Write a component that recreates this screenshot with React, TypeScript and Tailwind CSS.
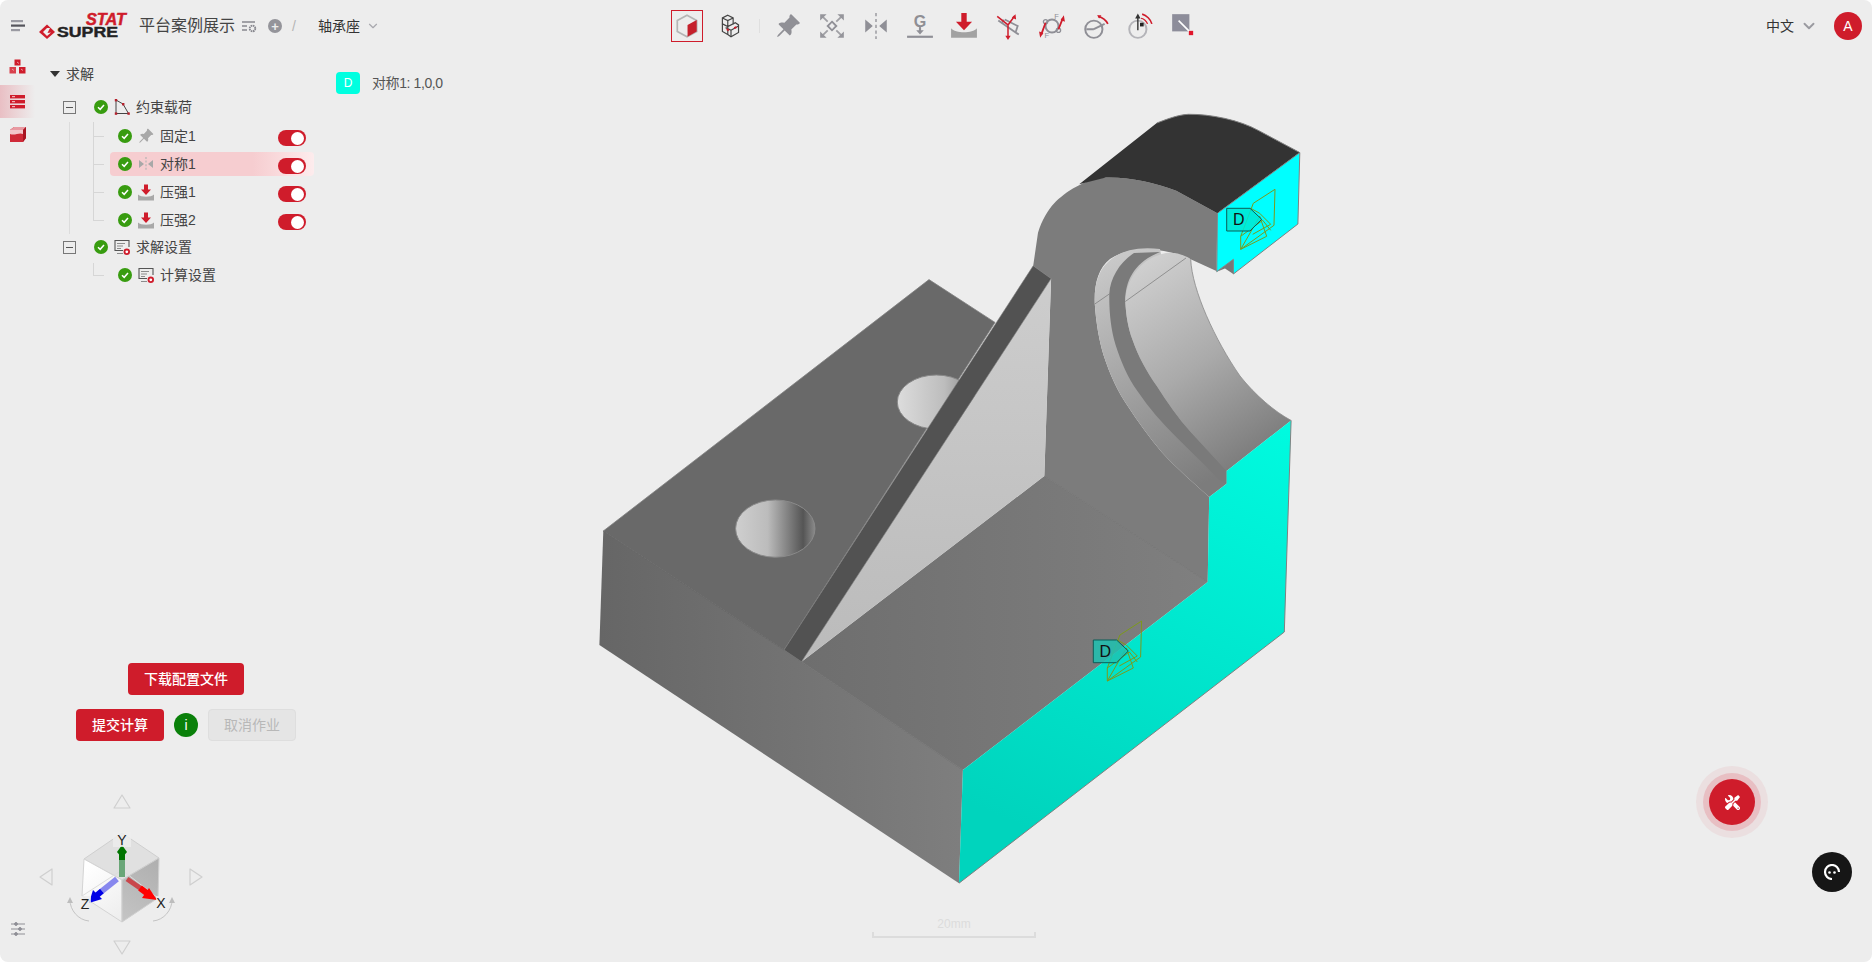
import { BsPinAngleFill } from "react-icons/bs";
import { FaTools } from "react-icons/fa";
import { LuChevronDown } from "react-icons/lu";

const fontStack = "font-['Liberation_Sans','Noto_Sans_CJK_SC',sans-serif]";

function MenuIcon() {
  return (
    <svg width="16" height="14" viewBox="0 0 16 14">
      <rect x="1" y="1" width="12" height="2.2" fill="#9a9aa2" />
      <rect x="1" y="5.5" width="14" height="2.2" fill="#55555c" />
      <rect x="1" y="10" width="9" height="2.2" fill="#9a9aa2" />
    </svg>
  );
}

function Logo() {
  return (
    <svg className="-mt-[2px]" width="92" height="30" viewBox="0 0 92 30">
      <path d="M1 22 L9 14.5 L17 22 L9 29 Z" fill="#cf1c2b" />
      <path d="M5 22 L9 18 L12 18 L9.5 23 L13 22.5 L9 26 Z" fill="#efefef" />
      <text x="19" y="27" fontFamily="Liberation Sans" fontWeight="700" fontSize="14" textLength="61" lengthAdjust="spacingAndGlyphs" stroke="#222" strokeWidth="0.4" fill="#222">
        SUPRE
      </text>
      <text x="48" y="15" fontFamily="Liberation Sans" fontWeight="700" fontStyle="italic" fontSize="16" textLength="40" lengthAdjust="spacingAndGlyphs" stroke="#cf1c2b" strokeWidth="0.5" fill="#cf1c2b">
        STAT
      </text>
    </svg>
  );
}

function ToolIcon({ children }: { children: React.ReactNode }) {
  return (
    <svg width="28" height="28" viewBox="0 0 26 26" fill="none">
      {children}
    </svg>
  );
}

const toolIcons = [
  <ToolIcon key="fit">
    <path d="M13 9 L17 13 L13 17 L9 13 Z" stroke="#8f8f96" strokeWidth="1.7" />
    <path d="M4 4 L9 9 M22 4 L17 9 M4 22 L9 17 M22 22 L17 17" stroke="#a0a0a5" strokeWidth="1.7" />
    <path d="M2 2 H8 L2 8 Z M24 2 H18 L24 8 Z M2 24 H8 L2 18 Z M24 24 H18 L24 18 Z" fill="#95959b" />
  </ToolIcon>,
  <ToolIcon key="sym">
    <path d="M3 7 L10 13 L3 19 Z M23 7 L16 13 L23 19 Z" fill="#8f8f96" />
    <path d="M13 1 V25" stroke="#a5a5aa" strokeWidth="1.6" strokeDasharray="3 2.4" />
  </ToolIcon>,
  <ToolIcon key="gravity">
    <text x="13" y="14" textAnchor="middle" fontFamily="Liberation Sans" fontWeight="700" fontSize="15" fill="#8f8f94">
      G
    </text>
    <path d="M13 14 V19" stroke="#8f8f96" strokeWidth="2" />
    <path d="M9.5 17 L13 21 L16.5 17 Z" fill="#8f8f96" />
    <rect x="1" y="22" width="24" height="2" fill="#8f8f96" />
  </ToolIcon>,
  <ToolIcon key="pressure">
    <path d="M10.5 1 H15.5 V9 H20.5 L13 17 L5.5 9 H10.5 Z" fill="#cf1c2b" />
    <path d="M1 15 C5 20 21 20 25 15 V24 H1 Z" fill="#a2a2a2" />
  </ToolIcon>,
  <ToolIcon key="bearing">
    <path d="M4 8 L23 21 M10 7 L22 13 L20 19 M9 7 L7 11" stroke="#8f8f96" strokeWidth="1.7" />
    <path d="M3 4 L13 12 M13 12 L19 4 M13 12 L13 24" stroke="#cf1c2b" strokeWidth="1.4" />
    <path d="M20 2 L20.5 7 L16.5 5 Z M13 26 L10.5 22 H15.5 Z" fill="#cf1c2b" />
  </ToolIcon>,
  <ToolIcon key="force">
    <circle cx="13" cy="13" r="6" stroke="#8f8f96" strokeWidth="1.8" />
    <circle cx="7" cy="9" r="2" stroke="#8f8f96" strokeWidth="1.2" />
    <circle cx="19" cy="17" r="2" stroke="#8f8f96" strokeWidth="1.2" />
    <path d="M3 21 L7 10 M19 16 L23 6" stroke="#cf1c2b" strokeWidth="1.7" />
    <path d="M24 3 L25 9 L21 7.5 Z M2 24 L1 18 L5 19.5 Z" fill="#cf1c2b" />
    <text x="15" y="6.5" fontFamily="Liberation Sans" fontSize="7" fill="#8f8f96">F</text>
    <text x="6" y="24.5" fontFamily="Liberation Sans" fontSize="7" fill="#8f8f96">F</text>
  </ToolIcon>,
  <ToolIcon key="moment">
    <circle cx="11" cy="16" r="8" stroke="#8f8f96" strokeWidth="1.8" />
    <path d="M11 16 L21 11 M11 16 H4" stroke="#8f8f96" strokeWidth="1.8" />
    <path d="M15 4 C19 5 22 7 24 11" stroke="#cf1c2b" strokeWidth="1.6" />
    <path d="M14 3 L18 3 L16 6 Z" fill="#cf1c2b" />
  </ToolIcon>,
  <ToolIcon key="remote">
    <circle cx="11" cy="16" r="8" stroke="#b4b4b9" strokeWidth="1.8" />
    <path d="M11 17 V3" stroke="#333" strokeWidth="1.3" />
    <path d="M8.5 6 L11 1.5 L13.5 6 Z" fill="#333" />
    <rect x="13" y="10" width="3.4" height="3.4" fill="#222" />
    <path d="M15 2 C19 3 23 7 24 11" stroke="#cf1c2b" strokeWidth="1.5" />
    <path d="M14 6 C16 6 19 8 20 11" stroke="#cf1c2b" strokeWidth="1.2" />
  </ToolIcon>,
  <ToolIcon key="corner">
    <rect x="2" y="2" width="16" height="16" fill="#8d8d9a" />
    <path d="M8 8 L18 18" stroke="#fff" strokeWidth="1.5" />
    <rect x="17.5" y="17.5" width="4" height="4" fill="#e0162b" />
  </ToolIcon>,
];

function CubeIcon() {
  return (
    <svg width="26" height="28" viewBox="0 0 24 26" fill="none">
      <path d="M12 3 L21 8 V18 L12 23 L3 18 V8 Z" stroke="#b5b5b5" strokeWidth="1.6" />
      <path d="M12.5 12 L21 7.5 V18 L12.5 23 Z" fill="#c5202c" />
    </svg>
  );
}

function MultiCubeIcon() {
  return (
    <svg width="26" height="28" viewBox="0 0 24 26" fill="none" stroke="#444" strokeWidth="1.1">
      <path d="M9 3 L14 5.5 V11 L9 13.5 L4 11 V5.5 Z M4 5.5 L9 8 L14 5.5 M9 8 V13.5" />
      <path d="M4 11 V18 L9 21 L12 23 L19 19 V12 L16 10 L14 11" />
      <path d="M9 13.5 V21 M12 17 V23 M12 17 L19 13 M12 17 L7 14.5" />
      <path d="M8 16 L10 17 M15 15 L17 14" stroke="#cf1c2b" strokeWidth="1.8" />
    </svg>
  );
}

function ToolbarButton({ children, active }: { children: React.ReactNode; active?: boolean }) {
  return (
    <div className="flex h-8 w-11 items-center justify-center">
      <div className={active ? "flex size-8 items-center justify-center border border-[#cf1c2b]" : "flex size-8 items-center justify-center"}>
        {children}
      </div>
    </div>
  );
}

function Header() {
  return (
    <header className="flex h-[50px] shrink-0 items-center pt-[2px]">
      <div className="flex w-[665px] shrink-0 items-center">
        <div className="ml-[10px] flex w-[28px] shrink-0">
          <MenuIcon />
        </div>
        <div className="w-[96px] shrink-0">
          <Logo />
        </div>
        <span className="ml-[5px] text-base leading-6 text-[#444]">平台案例展示</span>
        <svg className="ml-[6px]" width="16" height="14" viewBox="0 0 16 14" fill="none">
          <path d="M1 3 H14 M1 7 H6 M1 11 H6" stroke="#88888f" strokeWidth="1.5" />
          <circle cx="11.5" cy="9.5" r="2.8" stroke="#88888f" strokeWidth="1.8" strokeDasharray="1.6 0.6" />
        </svg>
        <div className="ml-[11px] flex size-[14px] items-center justify-center rounded-full bg-[#94949a] text-[13px] leading-none font-bold text-[#ededed]">
          +
        </div>
        <span className="ml-[10px] text-sm leading-5 text-[#b5b5b5]">/</span>
        <span className="ml-[22px] text-sm leading-5 text-[#333]">轴承座</span>
        <LuChevronDown className="ml-[6px] text-[#a8a8ae]" size={14} />
      </div>

      <div className="flex items-center">
        <ToolbarButton active>
          <CubeIcon />
        </ToolbarButton>
        <ToolbarButton>
          <MultiCubeIcon />
        </ToolbarButton>
        <div className="mr-[6px] ml-[6px] h-[14px] w-px bg-[#dfdfdf]" />
        <ToolbarButton>
          <BsPinAngleFill size={26} className="text-[#909096]" />
        </ToolbarButton>
        {toolIcons.map((icon) => (
          <ToolbarButton key={icon.key}>{icon}</ToolbarButton>
        ))}
      </div>

      <div className="mr-[10px] ml-auto flex items-center">
        <span className="text-sm leading-5 text-[#333]">中文</span>
        <LuChevronDown className="ml-[6px] text-[#9a9aa0]" size={18} strokeWidth={2.5} />
        <div className="ml-[16px] flex size-7 items-center justify-center rounded-full bg-[#cf1c2b] text-sm leading-none text-white">
          A
        </div>
      </div>
    </header>
  );
}

function Rail() {
  return (
    <aside className="flex w-9 shrink-0 flex-col pt-[2px]">
      <div className="flex h-[33px] w-[35px] items-center justify-center pb-[5px]">
        <svg width="17" height="15" viewBox="0 0 17 15" fill="#cf1c2b">
          <path d="M5.5 0.5 H11.5 V6.5 H5.5 Z" />
          <path d="M0.5 8 H7 V14.5 H0.5 Z" fill="#d9414d" />
          <path d="M10 8 H16.5 V14.5 H10 Z" />
          <path d="M8 3 L10 4.5 M3 10 L5 11.5 M12 10 L14 11.5" stroke="#f2b8bd" strokeWidth="0.8" />
        </svg>
      </div>
      <div className="flex h-[33px] w-[35px] items-center justify-center bg-gradient-to-r from-[#e9bfc4] to-[#ededed]">
        <svg width="15" height="14" viewBox="0 0 15 14" fill="#cf1c2b">
          <rect width="15" height="3.4" y="0" />
          <rect width="15" height="3.4" y="5" />
          <rect width="15" height="3.4" y="10" />
          <path d="M2 1.7 H5 M2 6.7 H5 M2 11.7 H5" stroke="#fff" strokeWidth="0.8" />
        </svg>
      </div>
      <div className="flex h-[33px] w-[35px] items-center justify-center">
        <svg width="18" height="18" viewBox="0 0 18 18">
          <path d="M1 4 L5 1 H17 V12 L14 16 H1 Z" fill="#cf2a38" />
          <path d="M1 4 L5 1 H17 L14 4 Z" fill="#e89aa2" />
          <path d="M1 4 H14 V8 C10 6 6 10 1 8 Z" fill="#f3c6ca" />
          <path d="M14 4 L17 1 V12 L14 16 Z" fill="#a81522" />
        </svg>
      </div>
      <div className="mt-auto mb-[26px] flex w-[35px] justify-center">
        <svg width="14" height="14" viewBox="0 0 14 14" stroke="#8f8f96" fill="#8f8f96">
          <path d="M0 2 H14 M0 7 H14 M0 12 H14" strokeWidth="1.2" />
          <circle cx="5" cy="2" r="1.4" />
          <circle cx="9" cy="7" r="1.4" />
          <circle cx="5" cy="12" r="1.4" />
        </svg>
      </div>
    </aside>
  );
}

function StatusCheck() {
  return (
    <svg className="shrink-0" width="14" height="14" viewBox="0 0 14 14">
      <circle cx="7" cy="7" r="7" fill="#389c10" />
      <path d="M4 7.2 L6.2 9.3 L10 5" stroke="#fff" strokeWidth="1.5" fill="none" />
    </svg>
  );
}

function CollapseBox() {
  return (
    <span className="flex size-[13px] shrink-0 items-center justify-center border border-[#777]">
      <span className="h-px w-[7px] bg-[#555]" />
    </span>
  );
}

function ConstraintIcon() {
  return (
    <svg width="16" height="16" viewBox="0 0 16 16" fill="none">
      <path d="M2 1 V14.5 H14.5 L9 5 Z" stroke="#444" strokeWidth="1" />
      <rect x="0.8" y="0" width="2.4" height="2.4" fill="#b5202c" />
      <rect x="0.8" y="13.4" width="2.4" height="2.4" fill="#b5202c" />
      <rect x="13.4" y="13.4" width="2.4" height="2.4" fill="#b5202c" />
      <rect x="8" y="4" width="2.4" height="2.4" fill="#b5202c" />
    </svg>
  );
}

function SettingsDocIcon() {
  return (
    <svg width="16" height="16" viewBox="0 0 16 16" fill="none">
      <path d="M9 11.5 H1 V1.5 H15 V8" stroke="#555" strokeWidth="1.1" />
      <path d="M3 4.5 H11 M3 7 H9 M3 9.5 H7 M3 14.5 H9" stroke="#8c8c8c" strokeWidth="1.1" />
      <circle cx="12.8" cy="12.8" r="2.3" stroke="#cf1c2b" strokeWidth="1.8" fill="#fff" />
    </svg>
  );
}

function SymmetryIcon() {
  return (
    <svg width="16" height="16" viewBox="0 0 16 16">
      <path d="M1 4 L6 8 L1 12 Z M15 4 L10 8 L15 12 Z" fill="#a8a8a8" />
      <path d="M8 1 V15" stroke="#b5b5b5" strokeWidth="1.2" strokeDasharray="2 1.6" />
    </svg>
  );
}

function PressureIcon() {
  return (
    <svg width="17" height="17" viewBox="0 0 16 16">
      <path d="M6 0 H10 V5 H13 L8 10.5 L3 5 H6 Z" fill="#cf1c2b" />
      <path d="M0 10 C3 13 13 13 16 10 V16 H0 Z" fill="#a8a8a8" />
    </svg>
  );
}

function Toggle() {
  return (
    <span className="flex h-4 w-7 shrink-0 translate-y-[2px] items-center justify-end rounded-full bg-[#cf1c2b] pr-[2px]">
      <span className="size-[13px] rounded-full bg-white" />
    </span>
  );
}

type LoadRowProps = {
  label: string;
  icon: React.ReactNode;
  active?: boolean;
  toggle?: boolean;
};

function LoadRow({ label, icon, active, toggle = true }: LoadRowProps) {
  return (
    <div className="relative ml-[74px] flex h-7 w-[204px] items-center">
      <span className="absolute top-1/2 -left-[17px] h-px w-[11px] bg-[#d6d6d6]" />
      <div
        className={
          active
            ? "flex h-6 w-full items-center rounded bg-gradient-to-r from-[#f6cdd0] from-70% to-[#fdeced] px-2"
            : "flex h-6 w-full items-center px-2"
        }
      >
        <StatusCheck />
        <span className="ml-[6px] flex w-4 shrink-0 justify-center">{icon}</span>
        <span className="ml-[6px] text-sm leading-5 text-[#444]">{label}</span>
        {toggle && (
          <span className="ml-auto">
            <Toggle />
          </span>
        )}
      </div>
    </div>
  );
}

function GroupRow({ label, icon }: { label: string; icon: React.ReactNode }) {
  return (
    <div className="flex h-7 items-center pl-[27px]">
      <CollapseBox />
      <span className="ml-[18px]">
        <StatusCheck />
      </span>
      <span className="ml-[6px] flex w-4 justify-center">{icon}</span>
      <span className="ml-[6px] text-sm leading-5 text-[#444]">{label}</span>
    </div>
  );
}

function TreePanel() {
  return (
    <aside className="flex w-[300px] shrink-0 flex-col pt-[10px] pb-[221px]">
      <div className="flex h-7 items-center pl-[14px]">
        <span className="h-0 w-0 border-x-[5px] border-t-[6px] border-x-transparent border-t-[#333]" />
        <span className="ml-[6px] text-sm leading-5 text-[#444]">求解</span>
      </div>

      <div className="mt-[5px]">
        <GroupRow label="约束载荷" icon={<ConstraintIcon />} />
      </div>
      <div className="relative mt-px">
        <span className="absolute top-0 left-[33px] h-[112px] w-px bg-[#dcdcdc]" />
        <span className="absolute top-0 left-[57px] h-[98px] w-px bg-[#d6d6d6]" />
        <LoadRow label="固定1" icon={<BsPinAngleFill size={16} className="text-[#a8a8a8]" />} />
        <LoadRow label="对称1" icon={<SymmetryIcon />} active />
        <LoadRow label="压强1" icon={<PressureIcon />} />
        <LoadRow label="压强2" icon={<PressureIcon />} />
      </div>

      <div className="-mt-px">
        <GroupRow label="求解设置" icon={<SettingsDocIcon />} />
      </div>
      <div className="relative">
        <span className="absolute top-[2px] left-[57px] h-[12px] w-px bg-[#d6d6d6]" />
        <LoadRow label="计算设置" icon={<SettingsDocIcon />} toggle={false} />
      </div>

      <div className="mt-auto flex flex-col items-center gap-[14px]">
        <button className="h-8 w-[116px] rounded bg-[#cf1c2b] text-sm leading-5 font-medium text-white">
          下载配置文件
        </button>
        <div className="flex items-center gap-[10px]">
          <button className="h-8 w-[88px] rounded bg-[#cf1c2b] text-sm leading-5 font-medium text-white">
            提交计算
          </button>
          <div className="flex size-6 items-center justify-center rounded-full bg-[#0a800a] text-sm leading-none text-white">
            i
          </div>
          <button className="h-8 w-[88px] rounded border border-[#dedede] bg-[#e5e5e5] text-sm leading-5 text-[#b8b8b8]">
            取消作业
          </button>
        </div>
      </div>
    </aside>
  );
}

function BoundaryMarker({ x, y, fill, stroke }: { x: number; y: number; fill: string; stroke: string }) {
  return (
    <g transform={`translate(${x} ${y})`}>
      <g fill="none" stroke="#7c9a1c" strokeWidth="1">
        <path d="M48.3 -19 L47.3 17 L14 41 V28 L26.6 -5 Z" />
        <path d="M14 41 L33 8 L40 28 Z" />
        <path d="M26 26 L44 16 L33 5 L24 0" />
        <path d="M14 28 L36 12 L44 22" />
      </g>
      <path d="M0 0 H23.3 L35 11 L23.3 22.7 H0 Z" fill={fill} fillOpacity="0.85" stroke={stroke} strokeWidth="1" />
      <text x="12" y="17" textAnchor="middle" fontFamily="Liberation Sans" fontSize="16" fill="#111">
        D
      </text>
    </g>
  );
}

function BearingModel() {
  return (
    <svg className="block h-full w-full" viewBox="336 50 1536 912" fill="none">
      <defs>
        <linearGradient id="frontFace" x1="600" x2="960" y1="0" y2="0" gradientUnits="userSpaceOnUse">
          <stop offset="0" stopColor="#666" />
          <stop offset="1" stopColor="#7e7e7e" />
        </linearGradient>
        <linearGradient id="floorFace" x1="800" x2="1200" y1="0" y2="0" gradientUnits="userSpaceOnUse">
          <stop offset="0" stopColor="#6e6e6e" />
          <stop offset="1" stopColor="#7f7f7f" />
        </linearGradient>
        <linearGradient id="ribFace" x1="0" x2="0" y1="280" y2="660" gradientUnits="userSpaceOnUse">
          <stop offset="0" stopColor="#cdcdcd" />
          <stop offset="1" stopColor="#bbb" />
        </linearGradient>
        <linearGradient id="cyanFace" x1="1290" y1="420" x2="1100" y2="860" gradientUnits="userSpaceOnUse">
          <stop offset="0" stopColor="#00fbe0" />
          <stop offset="1" stopColor="#00d4bd" />
        </linearGradient>
        <linearGradient id="boreFace" x1="1130" y1="255" x2="1260" y2="450" gradientUnits="userSpaceOnUse">
          <stop offset="0" stopColor="#d4d4d4" />
          <stop offset="0.55" stopColor="#aaa" />
          <stop offset="1" stopColor="#7d7d7d" />
        </linearGradient>
        <linearGradient id="ringFace" x1="1095" y1="270" x2="1210" y2="480" gradientUnits="userSpaceOnUse">
          <stop offset="0" stopColor="#c8c8c8" />
          <stop offset="1" stopColor="#7c7c7c" />
        </linearGradient>
        <linearGradient id="holeA" x1="736" x2="815" y1="0" y2="0" gradientUnits="userSpaceOnUse">
          <stop offset="0" stopColor="#cfcfcf" />
          <stop offset="0.4" stopColor="#bcbcbc" />
          <stop offset="0.85" stopColor="#555" />
          <stop offset="1" stopColor="#8a8a8a" />
        </linearGradient>
        <linearGradient id="holeB" x1="898" x2="975" y1="0" y2="0" gradientUnits="userSpaceOnUse">
          <stop offset="0" stopColor="#dcdcdc" />
          <stop offset="0.6" stopColor="#bdbdbd" />
          <stop offset="1" stopColor="#888" />
        </linearGradient>
      </defs>

      {/* base plate */}
      <path d="M603.3 531 L929 279.6 L995 322.4 L784 650 Z" fill="#696969" stroke="#808080" strokeWidth="0.8" />
      <ellipse cx="775.3" cy="528.6" rx="39.7" ry="28.6" fill="url(#holeA)" stroke="#8a8a8a" />
      <ellipse cx="936.3" cy="402" rx="39" ry="27" fill="url(#holeB)" stroke="#888" />

      <path d="M603.3 531 L599.4 645 L959 883.2 L962.9 770 L801.5 661.7 L784 650 Z" fill="url(#frontFace)" />
      <path d="M603.3 531 L784 650 L801.5 661.7 L962.9 770" stroke="#606060" strokeWidth="0.7" />

      {/* floor, wall and arm */}
      <path d="M801.5 661.7 L1044.3 476 L1207.7 582 L962.9 770 Z" fill="url(#floorFace)" />
      <path d="M1033.2 265.8 L1038 232.7 C1042 220 1048 210 1054 203.6 C1065 192 1085 179 1105.9 177.6 C1130 177 1155 183 1176.2 190.8 L1217.4 213.3 L1216.4 270.9 L1190.7 259.2 C1160 246 1130 246 1110 259 C1098 268 1094 285 1094.8 304 C1096 322 1099 340 1103.5 355 C1110 375 1118 392 1127.7 406 C1138 422 1150 438 1161.6 452 C1176 468 1195 484 1209.2 497 L1207.7 582 L1044.3 476 L1051.1 278.6 Z" fill="#7c7c7c" />
      <path d="M1044.3 476 L1207.7 582" stroke="#6b6b6b" strokeWidth="0.7" />

      {/* dark top of the arm */}
      <path d="M1079.2 184.2 L1156.8 123 C1170 118 1178 115 1188.3 114.3 C1210 114 1240 120 1258.6 130.6 L1299.8 152.6 L1217.4 213.3 L1176.2 190.8 C1155 183 1130 177 1105.9 177.6 Z" fill="#333" />
      <path d="M1156.8 123 C1170 118 1178 115 1188.3 114.3 C1210 114 1240 120 1258.6 130.6 L1299.8 152.6" stroke="#808080" strokeWidth="1" />

      {/* bore */}
      <path d="M1160 249 C1135 246 1118 252 1108 262 C1097 272 1094 288 1094.8 304 C1096 322 1099 340 1103.5 355 C1110 375 1118 392 1127.7 406 C1138 422 1150 438 1161.6 452 C1176 468 1195 484 1209.2 497 L1226.6 483.7 L1226.6 470.9 L1170 300 Z" fill="url(#ringFace)" />
      <path d="M1134 253 C1120 262 1110 278 1109.3 294 C1109 312 1111 330 1115.6 345 C1121 362 1128 378 1137.4 391 C1149 408 1162 423 1176.2 437 L1219.8 480 L1226.6 483.7 L1226.6 470.9 L1190.7 432 C1178 418 1167 402 1156.8 386 C1147 372 1138 356 1132.6 340 C1128 328 1126 315 1125.3 301.5 C1125 280 1135 262 1160 252 Z" fill="#7a7a7a" />
      <path d="M1125.3 301.5 C1126 280 1140 258 1166 253 C1175 252 1185 255 1190.7 259.2 C1192 290 1215 340 1240 376 C1255 395 1275 412 1291.1 420.4 L1226.6 470.9 L1190.7 432 C1178 418 1167 402 1156.8 386 C1147 372 1138 356 1132.6 340 C1128 328 1126 315 1125.3 301.5 Z" fill="url(#boreFace)" />
      <path d="M1094.8 304 L1109.3 294 M1125.3 301.5 L1186 258" stroke="#777" strokeWidth="0.7" />
      <path d="M1190.7 259.2 C1192 290 1215 340 1240 376 C1255 395 1275 412 1291.1 420.4" stroke="#888" strokeWidth="0.8" />

      {/* web */}
      <path d="M1051.1 278.6 L1044.3 476 L801.5 661.7 Z" fill="url(#ribFace)" />
      <path d="M1033.2 265.8 L1051.1 278.6 L801.5 661.7 L784 650 Z" fill="#525252" stroke="#7a7a7a" strokeWidth="0.6" />

      {/* cyan symmetry faces */}
      <path d="M962.9 770 L1207.7 582 L1209.2 497 L1226.6 483.7 L1226.6 470.9 L1291.1 420.4 L1284.3 632 L959 883.2 Z" fill="url(#cyanFace)" />
      <path d="M1291.1 420.4 L1284.3 632 L959 883.2" stroke="#808080" strokeWidth="1" />
      <path d="M1216.7 271.7 L1233.3 259.3 V274 L1225 268.5 Z" fill="#777" />
      <path d="M1217.4 213.3 L1299.8 152.6 L1297.9 224 L1233.4 274 V259.3 L1216.7 271.7 Z" fill="#0ff" stroke="#808080" strokeWidth="1" />

      <BoundaryMarker x={1226.7} y={208.3} fill="#00e8d4" stroke="#0b5e58" />
      <BoundaryMarker x={1093.3} y={640} fill="#1fc2b2" stroke="#0b5e58" />
    </svg>
  );
}

function NavCube() {
  return (
    <svg className="absolute bottom-0 left-[30px]" width="180" height="172" viewBox="0 0 180 172" fill="none">
      <defs>
        <linearGradient id="cubeLeft" x1="53" y1="80" x2="92" y2="130" gradientUnits="userSpaceOnUse">
          <stop offset="0" stopColor="#fff" />
          <stop offset="1" stopColor="#ededed" />
        </linearGradient>
        <linearGradient id="cubeRight" x1="92" y1="130" x2="129" y2="75" gradientUnits="userSpaceOnUse">
          <stop offset="0" stopColor="#c4c4c4" />
          <stop offset="1" stopColor="#b0b0b0" />
        </linearGradient>
      </defs>
      <path d="M92 43 L129 68 L92 90 L54 69 Z" fill="#e0e0e0" stroke="#cfcfcf" />
      <path d="M54 69 L92 90 L92 132 L52 106 Z" fill="url(#cubeLeft)" stroke="#d4d4d4" />
      <path d="M129 68 L92 90 L92 132 L128 108 Z" fill="url(#cubeRight)" stroke="#cfcfcf" />
      <path d="M52 106 L92 80 L128 108" stroke="#dcdcdc" />
      <path d="M92 87 V70" stroke="#6aa678" strokeWidth="6" />
      <path d="M92 70 V62" stroke="#007400" strokeWidth="6" />
      <path d="M92 55 L97 62 L92 68 L87 62 Z" fill="#007400" />
      <path d="M87 89 L72 101" stroke="#8888ee" strokeWidth="6" />
      <path d="M72 101 L66 106" stroke="#0000e6" strokeWidth="6" />
      <path d="M59 113 L63 100 L72 109 Z" fill="#0000e6" />
      <path d="M97 89 L113 100" stroke="#c9474c" strokeWidth="5" />
      <path d="M110 98 L118 104" stroke="#f00" strokeWidth="6" />
      <path d="M127 110 L112 108 L119 98 Z" fill="#f00" />
      <rect x="83" y="42" width="18" height="15" fill="#ededed" fillOpacity="0.8" />
      <rect x="50" y="106" width="11" height="14" fill="#ededed" fillOpacity="0.8" />
      <rect x="126" y="106" width="12" height="14" fill="#ededed" fillOpacity="0.8" />
      <text x="92" y="55" textAnchor="middle" fontFamily="Liberation Sans" fontSize="14" fill="#222">Y</text>
      <text x="55" y="119" textAnchor="middle" fontFamily="Liberation Sans" fontSize="14" fill="#222">Z</text>
      <text x="131" y="118" textAnchor="middle" fontFamily="Liberation Sans" fontSize="14" fill="#222">X</text>
      <g stroke="#cfcfcf" strokeWidth="1.2" strokeLinejoin="round">
        <path d="M92 5 L84 18 H100 Z" />
        <path d="M10 87 L22 79 V95 Z" />
        <path d="M172 87 L160 79 V95 Z" />
        <path d="M92 164 L84 151 H100 Z" />
      </g>
      <g stroke="#c4c4c4" strokeWidth="1">
        <path d="M59 131 C48 130 40 120 40 110" />
        <path d="M123 131 C134 130 142 120 142 110" />
      </g>
      <path d="M40 107 L37 113 H43 Z M142 107 L139 113 H145 Z" fill="#bdbdbd" />
    </svg>
  );
}

function ScaleBar() {
  return (
    <div className="absolute bottom-[24px] left-[536px] flex w-[164px] flex-col items-center">
      <span className="text-xs leading-4 text-[#dcdcdc]">20mm</span>
      <div className="h-[6px] w-full border-x-2 border-b-2 border-[#dcdcdc]" />
    </div>
  );
}

export default function App() {
  return (
    <div className={`h-screen w-full overflow-hidden bg-white ${fontStack}`}>
      <div className="flex h-full flex-col overflow-hidden rounded-lg bg-[#ededed]">
        <Header />
        <div className="relative flex min-h-0 flex-1">
          <Rail />
          <TreePanel />
          <main className="relative min-w-0 flex-1">
            <BearingModel />

            <div className="absolute top-[22px] left-0 flex items-center">
              <span className="flex h-[22px] w-6 items-center justify-center rounded bg-[#00ffe0] text-xs leading-none text-white">
                D
              </span>
              <span className="ml-3 text-sm leading-5 tracking-[-0.4px] text-[#555]">对称1: 1,0,0</span>
            </div>

            <ScaleBar />

            <div className="absolute top-[716px] left-[1360px] flex size-[72px] items-center justify-center rounded-full bg-[#ebdfe0]">
              <div className="flex size-[58px] items-center justify-center rounded-full bg-[#e8bfc3]">
                <div className="flex size-[46px] items-center justify-center rounded-full bg-[#cf1c2b] text-white">
                  <FaTools size={15} className="-scale-x-100" />
                </div>
              </div>
            </div>

            <div className="absolute top-[802px] left-[1476px] flex size-10 items-center justify-center rounded-full bg-[#161616]">
              <svg width="18" height="16" viewBox="0 0 18 16" fill="none">
                <path d="M16 8 A7 7 0 1 0 9 15" stroke="#fff" strokeWidth="2.2" />
                <circle cx="6.5" cy="8.5" r="1.3" fill="#fff" />
                <circle cx="11.5" cy="8.5" r="1.3" fill="#fff" />
              </svg>
            </div>
          </main>
          <NavCube />
        </div>
      </div>
    </div>
  );
}
